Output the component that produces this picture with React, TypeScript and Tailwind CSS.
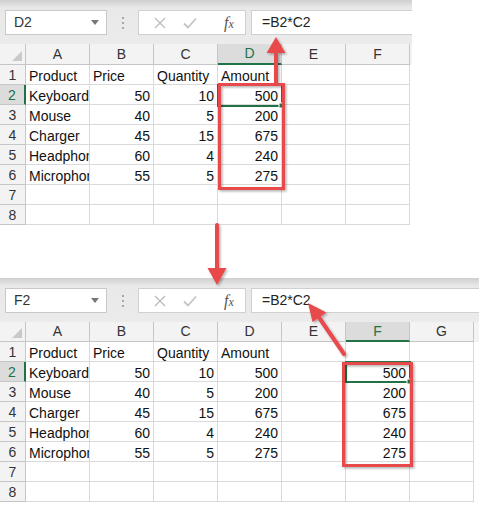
import React from "react";

type Row = string[];

const data: Row[] = [
  ["Product", "Price", "Quantity", "Amount"],
  ["Keyboard", "50", "10", "500"],
  ["Mouse", "40", "5", "200"],
  ["Charger", "45", "15", "675"],
  ["Headphones", "60", "4", "240"],
  ["Microphones", "55", "5", "275"],
];

const fColumn = ["", "500", "200", "675", "240", "275"];

function Toolbar({ name, formula }: { name: string; formula: string }) {
  return (
    <div className="relative h-[44px] bg-gradient-to-b from-[#cfcfcf] via-[#e9e9e9] via-[18%] to-[#ebebeb] flex items-start pt-[10px] pl-[5px]">
      <div className="w-[102px] h-[25px] bg-white border border-[#c8c8c8] flex items-center justify-between pl-[8px] pr-[7px] text-[14px] text-[#333]">
        <span>{name}</span>
        <svg width="8" height="5" viewBox="0 0 8 5">
          <path d="M0 0 L8 0 L4 5 Z" fill="#777" />
        </svg>
      </div>
      <div className="w-[31px] h-[25px] flex flex-col items-center justify-center gap-[3px]">
        <span className="w-[2px] h-[2px] bg-[#a8a8a8]" />
        <span className="w-[2px] h-[2px] bg-[#a8a8a8]" />
        <span className="w-[2px] h-[2px] bg-[#a8a8a8]" />
      </div>
      <div className="w-[108px] h-[25px] bg-white border border-[#d0d0d0] flex items-center pl-[15px]">
        <svg width="12" height="12" viewBox="0 0 12 12">
          <path d="M1 1 L11 11 M11 1 L1 11" stroke="#bdbdbd" strokeWidth="1.4" />
        </svg>
        <svg width="14" height="12" viewBox="0 0 14 12" className="ml-[17px]">
          <path d="M1 6.5 L5 10.5 L13 1.5" stroke="#c4c4c4" strokeWidth="1.8" fill="none" />
        </svg>
        <span className="ml-[27px] italic text-[16px] text-[#555] font-['Liberation_Serif',serif] leading-none">
          f<span className="text-[12px]">x</span>
        </span>
      </div>
      <div className="ml-[5px] flex-1 h-[25px] bg-white border border-r-0 border-[#d0d0d0] flex items-center pl-[10px] text-[14px] text-[#222]">
        {formula}
      </div>
    </div>
  );
}

function Grid({
  cols,
  selCol,
  extraF,
  tall,
}: {
  cols: string[];
  selCol: number;
  extraF: boolean;
  tall: boolean;
}) {
  const rows = [1, 2, 3, 4, 5, 6, 7, 8];
  return (
    <div className="bg-white">
      <div className={(tall ? "h-[21px]" : "h-[20px]") + " flex bg-[#f3f3f3]"}>
        <div className="w-[26px] h-full border-r border-b border-[#c6c6c6] relative">
          <svg width="10" height="10" viewBox="0 0 10 10" className="absolute right-[3px] bottom-[3px]">
            <path d="M10 0 L10 10 L0 10 Z" fill="#c9c9c9" />
          </svg>
        </div>
        {cols.map((c, i) => (
          <div
            key={c}
            className={
              i === selCol
                ? "w-[64px] h-full border-r border-[#c6c6c6] border-b-2 border-b-[#217346] bg-[#dcdcdc] text-[#217346] flex items-center justify-center text-[14px]"
                : "w-[64px] h-full border-r border-b border-[#c6c6c6] flex items-center justify-center text-[14px] text-[#333]"
            }
          >
            {c}
          </div>
        ))}
      </div>
      {rows.map((r) => {
        const rowData = data[r - 1];
        return (
          <div key={r} className="flex h-[20px]">
            <div
              className={
                r === 2
                  ? "w-[26px] h-full bg-[#dcdcdc] border-b border-[#c6c6c6] border-r-2 border-r-[#217346] flex items-center justify-center text-[14px] leading-[22px] text-[#217346]"
                  : "w-[26px] h-full bg-[#f3f3f3] border-r border-b border-[#c6c6c6] flex items-center justify-center text-[14px] leading-[22px] text-[#333]"
              }
            >
              {r}
            </div>
            {cols.map((c, i) => {
              let v = "";
              if (rowData && i < 4) v = rowData[i];
              if (extraF && c === "F" && r <= 6) v = fColumn[r - 1];
              const isNum = v !== "" && /^\d+$/.test(v);
              return (
                <div
                  key={c}
                  className={
                    "w-[64px] h-full border-r border-b border-[#dadada] overflow-hidden whitespace-nowrap text-[14px] leading-[23px] text-[#111] " +
                    (isNum ? "text-right pr-[3px]" : "text-left pl-[3px]")
                  }
                >
                  {v}
                </div>
              );
            })}
          </div>
        );
      })}
    </div>
  );
}

export default function App() {
  return (
    <div className="relative w-[479px] h-[505px] bg-white overflow-hidden font-['Liberation_Sans',Arial,sans-serif]">
      <div className="w-[412px]">
        <Toolbar name="D2" formula="=B2*C2" />
        <Grid cols={["A", "B", "C", "D", "E", "F"]} selCol={3} extraF={false} tall={true} />
      </div>
      <div className="h-[53px]" />
      <div className="w-[479px]">
        <Toolbar name="F2" formula="=B2*C2" />
        <Grid cols={["A", "B", "C", "D", "E", "F", "G"]} selCol={5} extraF={true} tall={false} />
      </div>

      <svg className="absolute left-0 top-0 pointer-events-none" width="479" height="505" viewBox="0 0 479 505">
        <defs>
          <filter id="sh" x="-20%" y="-20%" width="140%" height="140%">
            <feDropShadow dx="1.5" dy="1.5" stdDeviation="1.2" floodColor="#000" floodOpacity="0.3" />
          </filter>
        </defs>
        {/* top selection */}
        <rect x="218" y="85" width="64" height="21" fill="none" stroke="#217346" strokeWidth="2" />
        <rect x="279" y="103" width="5" height="5" fill="#217346" stroke="#fff" strokeWidth="1" />
        {/* bottom selection */}
        <rect x="346" y="362" width="64" height="20" fill="none" stroke="#217346" strokeWidth="2" />
        <rect x="407" y="379" width="5" height="5" fill="#217346" stroke="#fff" strokeWidth="1" />

        <g filter="url(#sh)">
          <rect x="219.5" y="84.5" width="64" height="104" fill="none" stroke="#e84a4c" strokeWidth="3" />
          <rect x="343.5" y="363.5" width="68" height="102" fill="none" stroke="#e84a4c" strokeWidth="3" />
          {/* up arrow */}
          <line x1="276" y1="83" x2="276" y2="50" stroke="#e84a4c" strokeWidth="4" />
          <path d="M276 37 L285.5 53 L266.5 53 Z" fill="#e84a4c" />
          {/* down arrow */}
          <line x1="217" y1="225" x2="217" y2="270" stroke="#e84a4c" strokeWidth="4" strokeLinecap="round" />
          <path d="M217 285 L207.5 268 L226.5 268 Z" fill="#e84a4c" />
          {/* diagonal arrow */}
          <line x1="344" y1="354" x2="318" y2="316" stroke="#e84a4c" strokeWidth="4" strokeLinecap="round" />
          <path d="M308 303 L326.5 312.5 L312.5 322 Z" fill="#e84a4c" />
        </g>
      </svg>
    </div>
  );
}
